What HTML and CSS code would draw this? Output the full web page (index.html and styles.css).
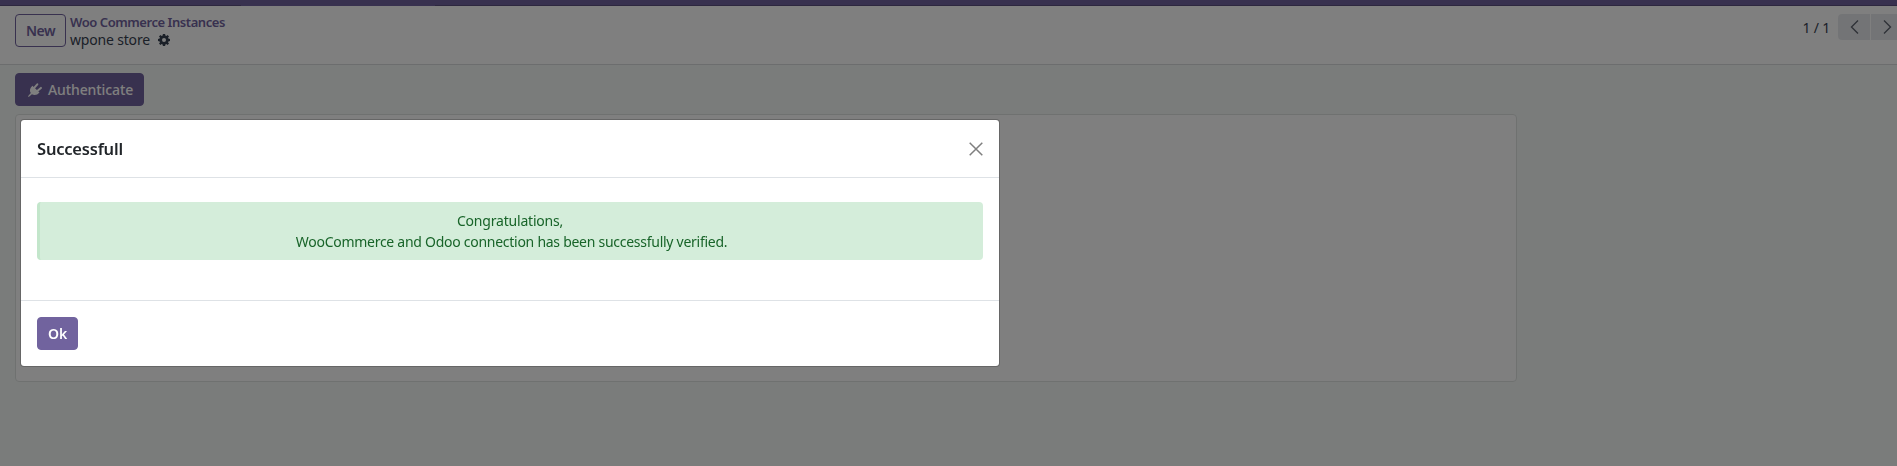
FILE: index.html
```
<!DOCTYPE html>
<html lang="en">
<head>
<meta charset="utf-8">
<title>Woo Commerce Instances</title>
<link rel="stylesheet" href="styles.css">
</head>
<body>
<div class="navbar"><div class="navbar-tab"></div></div>
<header class="control-panel">
  <button class="btn btn-outline">New</button>
  <div class="breadcrumb">
    <a class="crumb-parent">Woo Commerce Instances</a>
    <div class="crumb-current"><span class="record-name">wpone store</span>
      <svg class="gear" viewBox="0 0 12 12"><path fill-rule="evenodd" d="M4.900 0h2.200l.3 1.600.9.400L9.600 1 11 2.400 10 3.700l.4.900 1.600.3v2.200l-1.600.3-.4.900 1 1.300L9.600 11l-1.300-1-.9.400-.3 1.600H4.900l-.3-1.600-.9-.4-1.300 1L1 9.600l1-1.300-.4-.9L0 7.100V4.900l1.600-.3.4-.9-1-1.300L2.400 1l1.300 1 .9-.4zM6 4a2 2 0 1 0 0 4 2 2 0 0 0 0-4z"/></svg>
    </div>
  </div>
  <div class="pager">
    <span class="pager-count">1 / 1</span>
    <div class="pager-buttons">
      <button class="pager-btn" aria-label="Previous"><svg viewBox="0 0 9 14"><path d="M8 .5 1.500 7 8 13.500"/></svg></button>
      <button class="pager-btn" aria-label="Next"><svg viewBox="0 0 9 14"><path d="M1 .5 7.500 7 1 13.500"/></svg></button>
    </div>
  </div>
</header>
<main class="content">
  <button class="btn btn-primary auth">
    <svg class="plug" viewBox="0 0 14 14"><path class="plug-body" d="M4.400 2.700 11.500 9.500C9.300 12.100 6.300 12.700 3.900 11.200L1.300 13.500 0 14l.4-1.300L2.800 10.100C1.200 7.700 2 4.800 4.400 2.700z"/><path class="plug-prongs" d="M6.200 4.900 9.300 1.300M9.300 7.900 12.900 4.900"/></svg>
    <span>Authenticate</span>
  </button>
  <section class="sheet"></section>
</main>
<div class="backdrop">
  <div class="modal" role="dialog">
    <div class="modal-header">
      <h4 class="modal-title">Successfull</h4>
      <svg class="close" viewBox="0 0 14 14"><path d="M.7.7l12.600 12.600M13.300.7.7 13.300"/></svg>
    </div>
    <div class="modal-body">
      <div class="alert"><span class="alert-lead">Congratulations,</span><br>WooCommerce and Odoo connection has been successfully verified.</div>
    </div>
    <div class="modal-footer"><button class="btn btn-primary ok">Ok</button></div>
  </div>
</div>
</body>
</html>
```
FILE: styles.css
```
* { box-sizing: border-box; }
body {
  margin: 0;
  height: 466px;
  overflow: hidden;
  background: #f5f9f7;
  color: #374151;
  font: 14px/21px "Noto Sans", "Open Sans", sans-serif;
}
.navbar { height: 6px; background: linear-gradient(#5a4f7f, #5a4f7f) 0 100% / 100% 1px no-repeat #71639e; }
.navbar-tab { width: 194px; height: 6px; margin-left: 241px; background: #71639e; }
.control-panel {
  display: flex;
  align-items: flex-start;
  height: 59px;
  padding: 8px 0 0 15px;
  background: #fff;
  border-bottom: 1px solid #d8dadd;
}
.btn {
  height: 33px;
  padding: 0 10px;
  border: 1px solid #71639e;
  border-radius: 4px;
  font: 500 14px/21px "Noto Sans", "Open Sans", sans-serif;
}
.btn-outline { width: 51px; background: #fff; color: #71639e; font-weight: 600; letter-spacing: -.5px; }
.btn-primary { background: #71639e; color: #fff; }
.breadcrumb { margin-left: 4px; }
.crumb-parent { display: block; height: 17px; line-height: 17px; font-size: 13px; font-weight: 600; letter-spacing: -.44px; color: #71639e; }
.crumb-current { display: flex; align-items: center; gap: 8px; height: 18px; line-height: 18px; }
.record-name { letter-spacing: -.18px; }
.gear { width: 12px; height: 12px; fill: #374151; }
.pager { display: flex; align-items: center; margin-left: auto; height: 26px; }
.pager-count { margin-right: 8px; letter-spacing: -.2px; }
.pager-buttons { display: flex; gap: 1px; width: 59px; margin-top: 0; overflow: hidden; }
.pager-btn {
  display: flex;
  flex: none;
  align-items: center;
  justify-content: center;
  width: 32px;
  height: 26px;
  padding: 0;
  border: 0;
  background: #e7e9ed;
}
.pager-btn:first-child { border-radius: 4px 0 0 4px; }
.pager-btn svg { width: 9px; height: 14px; fill: none; stroke: #5f636f; stroke-width: 1.400; }
.content { padding: 8px 0 0 15px; }
.auth { display: flex; align-items: center; width: 129px; padding: 0 0 0 12px; gap: 6px; letter-spacing: -.1px; }
.plug { width: 14px; height: 14px; }
.plug-body { fill: #fff; }
.plug-prongs { fill: none; stroke: #fff; stroke-width: 2; stroke-linecap: round; }
.sheet { width: 1502px; height: 268px; margin-top: 8px; background: #fff; border: 1px solid #dfe3e1; border-radius: 4px; }
.backdrop { position: fixed; inset: 0; padding: 119px 0 0 20px; background: rgba(0, 0, 0, .5); }
.modal { width: 980px; height: 248px; background: #fff; background-clip: padding-box; border: 1px solid rgba(0, 0, 0, .2); border-radius: 4px; }
.modal-header { display: flex; align-items: center; justify-content: space-between; height: 58px; padding: 0 16px; border-bottom: 1px solid #dee2e6; }
.modal-title { margin: 0; font-size: 16.500px; font-weight: 600; letter-spacing: -.2px; color: #212529; }
.close { width: 14px; height: 14px; fill: none; stroke: #7f7f7f; stroke-width: 1.500; }
.modal-body { height: 122px; padding: 24px 16px; }
.alert {
  height: 58px;
  padding: 8px;
  border-left: 3px solid #c3e6cb;
  border-radius: 4px;
  background: #d4edda;
  color: #186429;
  letter-spacing: -.27px;
  text-align: center;
}
.alert-lead { margin-right: 3px; letter-spacing: -.2px; }
.modal-footer { height: 66px; padding: 16px; border-top: 1px solid #dee2e6; }
.ok { display: block; width: 41px; font-weight: 600; letter-spacing: -.2px; }
```
